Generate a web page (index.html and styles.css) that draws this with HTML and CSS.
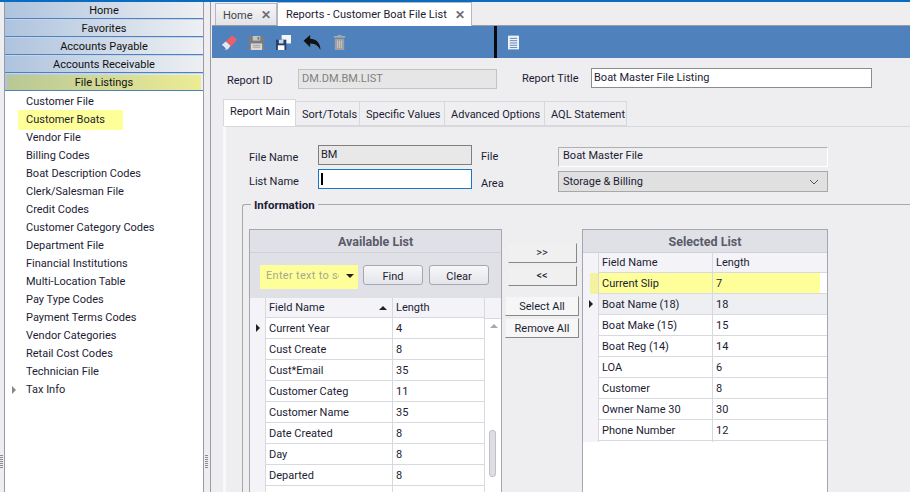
FILE: index.html
```html
<!DOCTYPE html>
<html lang="en">
<head>
    <meta charset="UTF-8">
    <title>Reports - Customer Boat File List</title>
    <link rel="stylesheet" href="styles.css">
</head>
<body>
    <div class="app">
        <div class="sidebar">
            <div class="nav-head">Home</div>
            <div class="nav-head">Favorites</div>
            <div class="nav-head">Accounts Payable</div>
            <div class="nav-head">Accounts Receivable</div>
            <div class="nav-head active"><span>File Listings</span></div>
            <div class="nav-list">
                <div class="nav-item">Customer File</div>
                <div class="nav-item marked">Customer Boats</div>
                <div class="nav-item">Vendor File</div>
                <div class="nav-item">Billing Codes</div>
                <div class="nav-item">Boat Description Codes</div>
                <div class="nav-item">Clerk/Salesman File</div>
                <div class="nav-item">Credit Codes</div>
                <div class="nav-item">Customer Category Codes</div>
                <div class="nav-item">Department File</div>
                <div class="nav-item">Financial Institutions</div>
                <div class="nav-item">Multi-Location Table</div>
                <div class="nav-item">Pay Type Codes</div>
                <div class="nav-item">Payment Terms Codes</div>
                <div class="nav-item">Vendor Categories</div>
                <div class="nav-item">Retail Cost Codes</div>
                <div class="nav-item">Technician File</div>
                <div class="nav-item"><i class="tree-arrow"></i>Tax Info</div>
            </div>
            <div class="grip left-grip"></div>
            <div class="grip right-grip"></div>
        </div>
        <div class="splitter"></div>

        <div class="main">
            <div class="doc-tabs">
                <div class="doc-tab">Home <b class="close">✕</b></div>
                <div class="doc-tab current">Reports - Customer Boat File List <b class="close">✕</b></div>
            </div>
            <div class="doc">
                <div class="toolbar">
                    <svg class="tool" viewBox="0 0 16 16"><path d="M0 10.500 9 2l2-1.500 5 4-1 2-8 8.500H3.500z" fill="#e8606a"/><path d="M0 10.500l4-3.500 5 4.500-3 4H3z" fill="#dcebfa"/><path d="M.5 12l3 3" stroke="#3a78c0" stroke-width="1.500"/></svg>
                    <svg class="tool" viewBox="0 0 16 16"><path d="M0 1h14l2 2v13H0z" fill="#7c7c7c"/><path d="M4 1h8v5H4z" fill="#c4c4c4"/><path d="M9 2h2v3H9z" fill="#7c7c7c"/><path d="M2 9h12v7H2z" fill="#d8d8d8"/><path d="M4 11h8M4 13h8" stroke="#a0a0a0"/></svg>
                    <svg class="tool" viewBox="0 0 16 16"><path d="M6 0h10v9H6z" fill="#f2f5fa"/><path d="M0 5h11v11H0z" fill="#24406e"/><path d="M3 5h5v4H3z" fill="#c9d4e6"/><path d="M2 11h7v5H2z" fill="#fff"/></svg>
                    <svg class="tool wide" viewBox="0 0 18 16"><path d="M0 6 7 0v4c6 0 11 4 11 12-2-4-5-7-11-7v4z" fill="#111"/></svg>
                    <svg class="tool" viewBox="0 0 16 16"><path d="M6 0h4v1h4v2H2V1h4z" fill="#a8a8a8"/><path d="M3 4h10v12H3z" fill="#a0a0a0"/><path d="M6 6v8M8 6v8M10 6v8" stroke="#c8c8c8"/></svg>
                    <div class="tool-sep"></div>
                    <svg class="tool list-icon" viewBox="0 0 12 15"><path d="M0 0h12v15H0z" fill="#eef2f8"/><path d="M2 3h8M2 5.500h8M2 8h8M2 10.500h8M2 13h8" stroke="#5a7ea8"/></svg>
                </div>

                <div class="report-row">
                    <span class="lbl id-lbl">Report ID</span>
                    <div class="field id-field">DM.DM.BM.LIST</div>
                    <span class="lbl title-lbl">Report Title</span>
                    <div class="field title-field">Boat Master File Listing</div>
                </div>

                <div class="page-tabs">
                    <div class="page-tab current">Report Main</div>
                    <div class="page-tab">Sort/Totals</div>
                    <div class="page-tab">Specific Values</div>
                    <div class="page-tab">Advanced Options</div>
                    <div class="page-tab">AQL Statement</div>
                </div>

                <div class="page">
                    <div class="file-form">
                        <span class="lbl">File Name</span>
                        <div class="field name-field">BM</div>
                        <span class="lbl file-lbl">File</span>
                        <div class="field file-field">Boat Master File</div>
                        <span class="lbl">List Name</span>
                        <div class="field name-field focus"><i class="caret"></i></div>
                        <span class="lbl area-lbl">Area</span>
                        <div class="field area-field">Storage &amp; Billing
                            <svg class="chevron" viewBox="0 0 10 6"><path d="M1 1l4 4 4-4" fill="none" stroke="#555"/></svg>
                        </div>
                    </div>

                    <div class="group">
                        <div class="group-title">Information</div>
                        <div class="lists">
                            <div class="list available">
                                <div class="list-head">Available List</div>
                                <div class="search">
                                    <div class="search-box"><span>Enter text to se</span><i class="down"></i></div>
                                    <div class="btn search-btn">Find</div>
                                    <div class="btn search-btn">Clear</div>
                                </div>
                                <div class="grid-wrap">
                                    <div class="grid">
                                        <div class="row header"><i></i><span class="sort">Field Name<b class="up"></b></span><span>Length</span></div>
                                        <div class="row"><i class="here"></i><span>Current Year</span><span>4</span></div>
                                        <div class="row"><i></i><span>Cust Create</span><span>8</span></div>
                                        <div class="row"><i></i><span>Cust*Email</span><span>35</span></div>
                                        <div class="row"><i></i><span>Customer Categ</span><span>11</span></div>
                                        <div class="row"><i></i><span>Customer Name</span><span>35</span></div>
                                        <div class="row"><i></i><span>Date Created</span><span>8</span></div>
                                        <div class="row"><i></i><span>Day</span><span>8</span></div>
                                        <div class="row"><i></i><span>Departed</span><span>8</span></div>
                                        <div class="row"><i></i><span></span><span></span></div>
                                    </div>
                                    <div class="scroll"><i class="scroll-up"></i><i class="thumb"></i></div>
                                </div>
                            </div>

                            <div class="movers">
                                <div class="btn move">&gt;&gt;</div>
                                <div class="btn move">&lt;&lt;</div>
                                <div class="btn all first">Select All</div>
                                <div class="btn all">Remove All</div>
                            </div>

                            <div class="list selected">
                                <div class="list-head">Selected List</div>
                                <div class="grid">
                                    <div class="row header"><i></i><span>Field Name</span><span>Length</span></div>
                                    <div class="row marked-row"><i></i><span>Current Slip</span><span>7</span></div>
                                    <div class="row shaded"><i class="here"></i><span>Boat Name (18)</span><span>18</span></div>
                                    <div class="row"><i></i><span>Boat Make (15)</span><span>15</span></div>
                                    <div class="row"><i></i><span>Boat Reg (14)</span><span>14</span></div>
                                    <div class="row"><i></i><span>LOA</span><span>6</span></div>
                                    <div class="row"><i></i><span>Customer</span><span>8</span></div>
                                    <div class="row"><i></i><span>Owner Name 30</span><span>30</span></div>
                                    <div class="row"><i></i><span>Phone Number</span><span>12</span></div>
                                </div>
                            </div>
                        </div>
                    </div>
                </div>
            </div>
        </div>
    </div>
</body>
</html>
```

FILE: styles.css
```css
* { margin: 0; padding: 0; box-sizing: border-box; }
html, body { height: 492px; overflow: hidden; }
body {
    font-family: 'Roboto', 'Liberation Sans', sans-serif;
    font-size: 11px;
    color: #1c1c34;
    background: #eeeef0;
    border-top: 2px solid #0a6cc0;
}
i { display: block; }

.app { display: flex; height: 490px; }

/* left navigation */
.sidebar {
    position: relative;
    width: 200px;
    margin-left: 4px;
    border-left: 1px solid #9a9aa6;
    border-right: 1px solid #9a9aa6;
    display: flex;
    flex-direction: column;
    flex-shrink: 0;
}
.nav-head {
    height: 18px;
    line-height: 18px;
    text-align: center;
    background: linear-gradient(90deg, #aec3de, #eef0f2);
    border-bottom: 1px solid #4f81bd;
    border-top: 1px solid #c4d4ea;
    color: #111;
}
.nav-head:first-child { height: 17px; border-top: 0; line-height: 17px; }
.nav-head.active { padding: 1px 2px; }
.nav-head.active span {
    display: block;
    height: 15px;
    line-height: 16px;
    background: linear-gradient(90deg, #b8c796, #ecec94);
}
.nav-list { flex: 1; background: #fff; padding-top: 2px; }
.nav-item { position: relative; height: 18px; line-height: 17px; padding-left: 21px; }
.nav-item.marked { background: #ffff99; margin-left: 13px; width: 105px; padding-left: 8px; height: 20px; margin-top: -1px; margin-bottom: -1px; line-height: 19px; }
.tree-arrow {
    position: absolute;
    left: 7px;
    top: 5px;
    border-left: 4px solid #888;
    border-top: 4px solid transparent;
    border-bottom: 4px solid transparent;
}
/* dotted resize handles on both sides of the panel */
.grip {
    position: absolute;
    top: 453px;
    width: 3px;
    height: 14px;
    background: repeating-linear-gradient(#8c8c96 0 1px, transparent 1px 2px);
}
.left-grip { left: -5px; }
.right-grip { right: -5px; }
.splitter { width: 7px; flex-shrink: 0; border-right: 1px solid #9a9aa6; }

/* document area */
.main { flex: 1; min-width: 0; padding-left: 1px; }
.doc-tabs { display: flex; height: 23px; padding-left: 3px; }
.doc-tab {
    height: 22px;
    margin-top: 1px;
    padding: 0 5px 0 7px;
    width: 62px;
    line-height: 23px;
    background: linear-gradient(#f6f6f8, #e2e3e8);
    border: 1px solid #b6b7c2;
    border-bottom: 0;
    white-space: nowrap;
    display: flex;
    justify-content: space-between;
    color: #444;
}
.doc-tab.current { width: 195px; margin-top: 0; height: 24px; background: #fff; color: #1c1c34; position: relative; padding: 0 6px 0 8px; line-height: 24px; }
.close { color: #6c6c76; font-size: 12px; font-weight: bold; }
.doc { border-top: 1px solid #9a9aa6; }
.toolbar {
    height: 32px;
    background: #4f81bd;
    display: flex;
    align-items: center;
    padding-left: 10px;
}
.tool { width: 15px; height: 15px; margin-right: 12px; flex-shrink: 0; }
.tool.wide { width: 18px; margin-right: 11px; }
.tool-sep { width: 3px; height: 32px; background: #0a0a0a; margin-left: 135px; margin-right: 11px; }
.tool.list-icon { width: 11px; }

.lbl { white-space: nowrap; }
.field {
    border: 1px solid #a8a8a8;
    height: 20px;
    line-height: 17px;
    padding-left: 2px;
    white-space: nowrap;
}
.report-row { display: flex; align-items: center; height: 41px; padding-bottom: 1px; }
.id-lbl { margin-left: 15px; width: 71px; margin-top: 5px; }
.id-field { width: 199px; background: #e6e6e6; border-color: #c4c4c4; color: #808080; margin-top: 2px; padding-left: 3px; }
.title-lbl { margin-left: 25px; width: 69px; }
.title-field { width: 281px; background: #fff; border-color: #8c8c8c; }

.page-tabs { display: flex; height: 27px; margin-left: 11px; align-items: flex-end; }
.page-tab {
    height: 25px;
    padding: 0 6px;
    line-height: 25px;
    text-align: center;
    width: 64px;
    background: #efeff1;
    border: 1px solid #d8d8dc;
    border-left: 0;
    white-space: nowrap;
}
.page-tab:nth-child(3) { width: 85px; }
.page-tab:nth-child(4) { width: 100px; }
.page-tab:nth-child(5) { width: 82px; }
.page-tab.current { height: 27px; background: #fff; border: 1px solid #d8d8dc; border-bottom: 0; line-height: 24px; width: 73px; }

.page { margin-left: 11px; height: 366px; background: #eeeef0; border-top: 1px solid #d8d8dc; border-left: 3px solid #f8f8f8; padding-left: 16px; }

.file-form {
    display: grid;
    grid-template-columns: 69px 154px 86px 270px;
    grid-template-rows: 20px 20px;
    row-gap: 4px;
    align-items: center;
    padding: 18px 0 0 7px;
}
.file-form .lbl { padding-top: 4px; }
.name-field { height: 20px; background: #e8e8e8; border-color: #7f7f7f; width: 154px; line-height: 18px; padding-left: 2px; }
.name-field.focus { background: #fff; border-color: #1878c8; }
.caret { width: 1px; height: 12px; border-left: 2px solid #000; margin-top: 3px; }
.file-form .file-lbl, .file-form .area-lbl { padding-left: 9px; }
.file-lbl { transform: translateY(-1px); }
.file-field { height: 20px; border-color: #b0b0b0 #fff #fff #b0b0b0; transform: translateY(2px); line-height: 15px; padding-left: 4px; }
.area-field {
    position: relative;
    background: #e0e0e0;
    height: 21px;
    transform: translateY(2px);
    padding-left: 4px;
    line-height: 19px;
}
.area-lbl { transform: translateY(2px); }
.chevron { position: absolute; right: 8px; top: 7px; width: 10px; height: 6px; }

.group {
    position: relative;
    margin-top: 15px;
    margin-right: -40px;
    height: 300px;
    border-top: 1px solid #a8a8a8;
    border-left: 1px solid #a8a8a8;
    border-top-left-radius: 3px;
    padding: 24px 0 0 6px;
}
.group-title {
    position: absolute;
    left: 8px;
    top: -7px;
    padding: 0 3px;
    background: #eeeef0;
    font-size: 11.5px;
    font-weight: bold;
    line-height: 15px;
}
.lists { display: flex; align-items: flex-start; }
.list { border: 1px solid #a6a6b2; border-bottom: 0; }
.list.available { width: 253px; height: 270px; background: #e0e1e6; }
.list.selected { width: 246px; height: 270px; background: #fff; }
.list-head {
    height: 23px;
    line-height: 24px;
    text-align: center;
    font-size: 12.5px;
    font-weight: bold;
    color: #5a5a6a;
    background: #e0e1e6;
    border-bottom: 1px solid #d0d0d8;
}
.search { height: 45px; display: flex; align-items: flex-start; padding: 12px 0 0 10px; }
.search-box {
    position: relative;
    width: 98px;
    height: 24px;
    background: #ffff99;
    margin-right: 5px;
    padding: 4px 0 0 6px;
    color: #a8a890;
    white-space: nowrap;
}
.search-box span { display: block; width: 73px; overflow: hidden; letter-spacing: 0.3px; }
.down {
    position: absolute;
    right: 4px;
    top: 9px;
    border-top: 4px solid #222;
    border-left: 4px solid transparent;
    border-right: 4px solid transparent;
}
.btn {
    text-align: center;
    height: 20px;
    line-height: 18px;
    background: linear-gradient(#f7f7f9, #e4e5ea);
    border: 1px solid #a6a6b2;
    white-space: nowrap;
}
.search-btn { width: 60px; border-radius: 3px; margin-right: 6px; line-height: 21px; }

.grid-wrap { display: flex; background: #fff; height: 195px; overflow: hidden; }
.grid-wrap .grid { width: 234px; }
.grid { background: #fff; }
.row { display: grid; height: 21px; border-bottom: 1px solid #d8d8e0; line-height: 22px; }
.available .row { grid-template-columns: 16px 127px 91px; }
.selected .row { grid-template-columns: 16px 114px 115px; }
.row > i { background: #f4f4f8; border-right: 1px solid #d8d8e0; position: relative; }
.row span { padding-left: 3px; white-space: nowrap; border-right: 1px solid #d8d8e0; }
.row span:last-child { border-right: 0; }
.row.header { height: 20px; background: #f4f4f8; line-height: 20px; }
.sort { position: relative; }
.up {
    position: absolute;
    right: 5px;
    top: 8px;
    border-bottom: 4px solid #222;
    border-left: 4px solid transparent;
    border-right: 4px solid transparent;
}
.here::after {
    content: '';
    position: absolute;
    left: 6px;
    top: 6px;
    border-left: 4px solid #222;
    border-top: 4px solid transparent;
    border-bottom: 4px solid transparent;
}
.marked-row { background: linear-gradient(90deg, #ffff99 237px, #fff 237px); }
.row.marked-row > i { background: linear-gradient(90deg, #f4f4f8 7px, #f2f2a0 7px); }
.shaded { background: #eeeff2; }

.scroll { position: relative; width: 17px; background: #fff; border-left: 1px solid #d8d8e0; }
.scroll::before { content: ''; display: block; height: 20px; background: #f4f4f8; border-bottom: 1px solid #d8d8e0; }
.scroll-up {
    position: absolute;
    left: 5px;
    top: 26px;
    border-bottom: 4px solid #a8a8b0;
    border-left: 4px solid transparent;
    border-right: 4px solid transparent;
}
.thumb {
    position: absolute;
    left: 4px;
    top: 132px;
    width: 7px;
    height: 47px;
    background: #dddde2;
    border: 1px solid #c0c0c8;
    border-radius: 3px;
}

.movers { width: 80px; padding: 14px 3px 0 3px; display: flex; flex-direction: column; align-items: center; }
.move { width: 69px; margin-bottom: 3px; border-color: #eee #888 #888 #eee; background: #f0f0f0; }
.all { width: 74px; margin-bottom: 2px; line-height: 19px; background: #f6f6f6; border-color: #eee #888 #888 #eee; }
.all.first { margin-top: 7px; }
```
